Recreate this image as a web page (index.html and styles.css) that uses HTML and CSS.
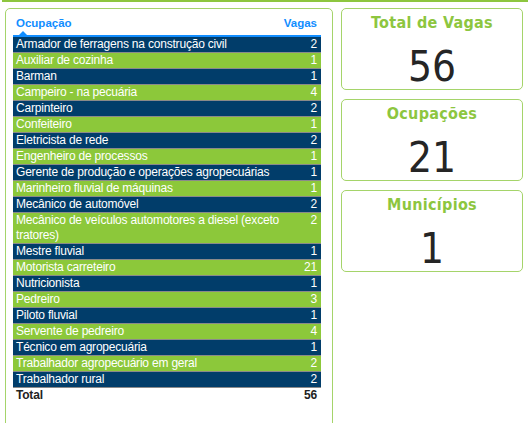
FILE: index.html
```html
<!DOCTYPE html>
<html lang="pt">
<head>
    <meta charset="UTF-8">
    <meta name="viewport" content="width=device-width, initial-scale=1.0">
    <title>Vagas por ocupação</title>
    <link rel="stylesheet" href="styles.css">
</head>
<body>
    <div class="top-line"></div>
    <div class="dashboard">
        <div class="table-panel">
            <table class="jobs-table">
                <colgroup>
                    <col class="col-name">
                    <col class="col-num">
                </colgroup>
                <thead>
                    <tr>
                        <th class="head-name"><span class="sorted">Ocupação</span></th>
                        <th class="head-num">Vagas</th>
                    </tr>
                </thead>
                <tbody>
                    <tr class="dark"><td>Armador de ferragens na construção civil</td><td class="num">2</td></tr>
                    <tr class="light"><td>Auxiliar de cozinha</td><td class="num">1</td></tr>
                    <tr class="dark"><td>Barman</td><td class="num">1</td></tr>
                    <tr class="light"><td>Campeiro - na pecuária</td><td class="num">4</td></tr>
                    <tr class="dark"><td>Carpinteiro</td><td class="num">2</td></tr>
                    <tr class="light"><td>Confeiteiro</td><td class="num">1</td></tr>
                    <tr class="dark"><td>Eletricista de rede</td><td class="num">2</td></tr>
                    <tr class="light"><td>Engenheiro de processos</td><td class="num">1</td></tr>
                    <tr class="dark"><td>Gerente de produção e operações agropecuárias</td><td class="num">1</td></tr>
                    <tr class="light"><td>Marinheiro fluvial de máquinas</td><td class="num">1</td></tr>
                    <tr class="dark"><td>Mecânico de automóvel</td><td class="num">2</td></tr>
                    <tr class="light"><td>Mecânico de veículos automotores a diesel (exceto tratores)</td><td class="num">2</td></tr>
                    <tr class="dark"><td>Mestre fluvial</td><td class="num">1</td></tr>
                    <tr class="light"><td>Motorista carreteiro</td><td class="num">21</td></tr>
                    <tr class="dark"><td>Nutricionista</td><td class="num">1</td></tr>
                    <tr class="light"><td>Pedreiro</td><td class="num">3</td></tr>
                    <tr class="dark"><td>Piloto fluvial</td><td class="num">1</td></tr>
                    <tr class="light"><td>Servente de pedreiro</td><td class="num">4</td></tr>
                    <tr class="dark"><td>Técnico em agropecuária</td><td class="num">1</td></tr>
                    <tr class="light"><td>Trabalhador agropecuário em geral</td><td class="num">2</td></tr>
                    <tr class="dark"><td>Trabalhador rural</td><td class="num">2</td></tr>
                </tbody>
                <tfoot>
                    <tr><td>Total</td><td class="num">56</td></tr>
                </tfoot>
            </table>
        </div>
        <div class="cards">
            <div class="card">
                <div class="card-title">Total de Vagas</div>
                <div class="card-value">56</div>
            </div>
            <div class="card">
                <div class="card-title">Ocupações</div>
                <div class="card-value">21</div>
            </div>
            <div class="card">
                <div class="card-title">Municípios</div>
                <div class="card-value">1</div>
            </div>
        </div>
    </div>
</body>
</html>
```

FILE: styles.css
```css
*, *::before, *::after {
    box-sizing: border-box;
    margin: 0;
    padding: 0;
}
body {
    font-family: 'Liberation Sans', Arial, sans-serif;
    background-color: #ffffff;
    color: #222;
    width: 528px;
    height: 423px;
    overflow: hidden;
}
.top-line {
    height: 2px;
    margin-left: 2px;
    background-color: #8dc63f;
}
.dashboard {
    display: flex;
    gap: 8px;
    padding: 6px 5px 0 5px;
}
.table-panel {
    flex: 0 0 328px;
    height: 440px;
    border: 1px solid #a5d46a;
    border-radius: 5px;
    padding: 7px 11px 0 7px;
}
.jobs-table {
    width: 100%;
    table-layout: fixed;
    border-collapse: collapse;
    font-size: 12px;
    letter-spacing: -0.2px;
}
.col-name { width: 282px; }
.col-num { width: 26px; }
.jobs-table th {
    color: #118dff;
    font-weight: bold;
    font-size: 11.5px;
    letter-spacing: 0;
    height: 20px;
    vertical-align: top;
    padding: 1px 4px 0 3px;
    border-bottom: 2px solid #118dff;
    white-space: nowrap;
}
.jobs-table th.head-name { text-align: left; }
.jobs-table th.head-num {
    text-align: right;
    direction: rtl; /* let the label spill to the left of the narrow column */
}
.sorted {
    position: relative;
}
.sorted::after {
    content: "";
    position: absolute;
    left: 3px;
    top: 14px;
    border-left: 4px solid transparent;
    border-right: 4px solid transparent;
    border-bottom: 4px solid #118dff;
}
.jobs-table td {
    padding: 0 4px 0 3px;
    line-height: 15px;
    vertical-align: top;
    border-bottom: 1px solid #8a8a8a;
}
.jobs-table td.num {
    text-align: right;
}
.jobs-table tr.dark { background-color: #013d6a; color: #ffffff; }
.jobs-table tr.light { background-color: #8cc83a; color: #ffffff; }
.jobs-table tfoot td {
    border-bottom: none;
    font-weight: bold;
    color: #222;
    padding-top: 0;
}
.cards {
    flex: 0 0 182px;
    display: flex;
    flex-direction: column;
    gap: 9px;
}
.card {
    height: 82px;
    border: 1px solid #a5d46a;
    border-radius: 5px;
    display: flex;
    flex-direction: column;
    align-items: center;
    padding-top: 4px;
}
.card-title {
    font-family: 'DejaVu Sans Condensed', 'DejaVu Sans', sans-serif;
    font-weight: bold;
    font-size: 16px;
    color: #8dc63f;
    letter-spacing: 0.3px;
}
.card-value {
    font-family: 'DejaVu Sans Condensed', 'DejaVu Sans', sans-serif;
    font-size: 42px;
    color: #252525;
    line-height: 50px;
    margin-top: 10px;
}
```
